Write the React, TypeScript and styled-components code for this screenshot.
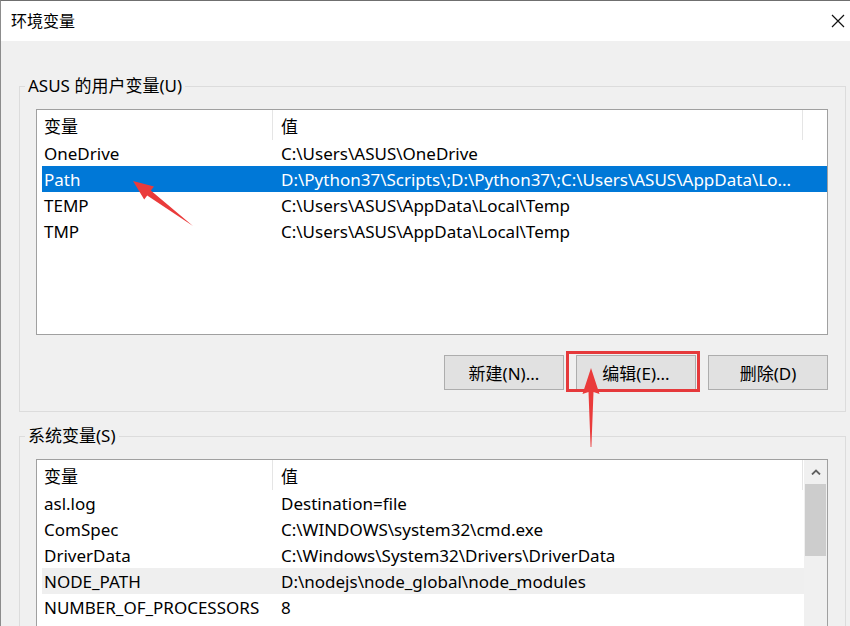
import React from 'react'
import styled, { createGlobalStyle } from 'styled-components'

const GlobalStyle = createGlobalStyle`
  html, body {
    margin: 0;
    padding: 0;
    background: #f0f0f0;
  }
  body {
    font-family: "Noto Sans", "Noto Sans CJK SC", sans-serif;
    color: #000;
    overflow: hidden;
  }
`

const Window = styled.div`
  position: relative;
  width: 850px;
  height: 626px;
  box-sizing: border-box;
  border-top: 1px solid #6f6f6f;
  border-left: 1px solid #8c8c8c;
  background: #f0f0f0;
  overflow: hidden;
  display: flex;
  flex-direction: column;
`

const TitleBar = styled.div`
  flex: none;
  height: 40px;
  background: #fff;
  display: flex;
  align-items: center;
  justify-content: space-between;
  padding: 0 5px 0 10px;
`

const Title = styled.span`
  font-size: 16px;
  line-height: 20px;
`

const CloseButton = styled.span`
  display: flex;
  width: 14px;
  height: 14px;
`

const Body = styled.div`
  flex: 1;
  padding: 0 4px 0 18px;
`

const Group = styled.fieldset<{ $top: number }>`
  margin: ${p => p.$top}px 0 0;
  padding: 0;
  border: 1px solid #dcdcdc;
  min-width: 0;
`

const Legend = styled.legend`
  margin-left: 5px;
  padding: 0 3px;
  font-size: 17px;
  line-height: 20px;
`

const GroupContent = styled.div`
  padding: 13px 17px 21px 16px;
`

const ListView = styled.div<{ $height: number }>`
  height: ${p => p.$height}px;
  border: 1px solid #a0a0a0;
  background: #fff;
  display: flex;
  overflow: hidden;
`

const ListBody = styled.div`
  flex: 1;
  padding-left: 5px;
  font-size: 17px;
`

const HeaderRow = styled.div`
  display: grid;
  grid-template-columns: 231px 530px;
  height: 30px;
`

const HeaderCell = styled.div<{ $pad: number }>`
  display: flex;
  align-items: center;
  padding-left: ${p => p.$pad}px;
  border-right: 1px solid #e5e5e5;
`

const Row = styled.div<{ $selected?: boolean; $hover?: boolean }>`
  display: grid;
  grid-template-columns: 231px 530px;
  height: 26px;
  align-items: center;
  background: ${p => (p.$selected ? '#0078d7' : p.$hover ? '#efefef' : 'transparent')};
  color: ${p => (p.$selected ? '#fff' : '#000')};
`

const Cell = styled.div<{ $pad: number }>`
  padding-left: ${p => p.$pad}px;
  white-space: nowrap;
  overflow: hidden;
`

const ScrollBar = styled.div`
  flex: none;
  width: 23px;
  background: #f0f0f0;
  display: flex;
  flex-direction: column;
  align-items: center;
`

const ScrollArrow = styled.div`
  height: 24px;
  display: flex;
  align-items: center;
  justify-content: center;
`

const ScrollThumb = styled.div`
  width: 21px;
  height: 72px;
  background: #cdcdcd;
`

const ButtonRow = styled.div`
  display: flex;
  justify-content: flex-end;
  gap: 12px;
  margin-top: 20px;
`

const Button = styled.button`
  width: 120px;
  height: 35px;
  box-sizing: border-box;
  border: 1px solid #adadad;
  background: #e1e1e1;
  font-family: inherit;
  font-size: 17px;
  color: #000;
  padding: 0;
`

const Annotations = styled.svg`
  position: absolute;
  left: -1px;
  top: -1px;
  pointer-events: none;
`

type Entry = { name: string; value: string; selected?: boolean; hover?: boolean }

const userVars: Entry[] = [
  { name: 'OneDrive', value: 'C:\\Users\\ASUS\\OneDrive' },
  { name: 'Path', value: 'D:\\Python37\\Scripts\\;D:\\Python37\\;C:\\Users\\ASUS\\AppData\\Lo...', selected: true },
  { name: 'TEMP', value: 'C:\\Users\\ASUS\\AppData\\Local\\Temp' },
  { name: 'TMP', value: 'C:\\Users\\ASUS\\AppData\\Local\\Temp' },
]

const systemVars: Entry[] = [
  { name: 'asl.log', value: 'Destination=file' },
  { name: 'ComSpec', value: 'C:\\WINDOWS\\system32\\cmd.exe' },
  { name: 'DriverData', value: 'C:\\Windows\\System32\\Drivers\\DriverData' },
  { name: 'NODE_PATH', value: 'D:\\nodejs\\node_global\\node_modules', hover: true },
  { name: 'NUMBER_OF_PROCESSORS', value: '8' },
  { name: 'OS', value: 'Windows_NT' },
]

const VarList: React.FC<{ entries: Entry[]; height: number; scroll?: boolean }> = ({ entries, height, scroll }) => (
  <ListView $height={height}>
    <ListBody>
      <HeaderRow>
        <HeaderCell $pad={2}>变量</HeaderCell>
        <HeaderCell $pad={8}>值</HeaderCell>
      </HeaderRow>
      {entries.map(e => (
        <Row key={e.name} $selected={e.selected} $hover={e.hover}>
          <Cell $pad={2}>{e.name}</Cell>
          <Cell $pad={8}>{e.value}</Cell>
        </Row>
      ))}
    </ListBody>
    {scroll && (
      <ScrollBar>
        <ScrollArrow>
          <svg width="10" height="6" viewBox="0 0 10 6">
            <polyline points="1,5.5 5,1.5 9,5.5" fill="none" stroke="#606060" strokeWidth="1.8" />
          </svg>
        </ScrollArrow>
        <ScrollThumb />
      </ScrollBar>
    )}
  </ListView>
)

const App: React.FC = () => (
  <>
    <GlobalStyle />
    <Window>
      <TitleBar>
        <Title>环境变量</Title>
        <CloseButton>
          <svg width="14" height="14" viewBox="0 0 14 14">
            <path d="M1 1 L13 13 M13 1 L1 13" stroke="#111" strokeWidth="1.2" />
          </svg>
        </CloseButton>
      </TitleBar>
      <Body>
        <Group $top={35}>
          <Legend>ASUS 的用户变量(U)</Legend>
          <GroupContent>
            <VarList entries={userVars} height={224} />
            <ButtonRow>
              <Button>新建(N)...</Button>
              <Button>编辑(E)...</Button>
              <Button>删除(D)</Button>
            </ButtonRow>
          </GroupContent>
        </Group>
        <Group $top={14}>
          <Legend>系统变量(S)</Legend>
          <GroupContent>
            <VarList entries={systemVars} height={220} scroll />
          </GroupContent>
        </Group>
      </Body>
      <Annotations width="851" height="627" viewBox="0 0 851 627">
        <rect x="567.5" y="352.5" width="131" height="38" fill="none" stroke="#e5393b" strokeWidth="3" />
        <polygon
          points="133,181 154,186.6 150.8,190.6 193,226 147.2,195.4 144.2,199.4"
          fill="#ea3b3b"
        />
        <polygon points="591,368 599.5,394 593.5,392 591.4,447 590.6,447 588.5,392 582.5,394" fill="#ea3b3b" />
      </Annotations>
    </Window>
  </>
)

export default App
